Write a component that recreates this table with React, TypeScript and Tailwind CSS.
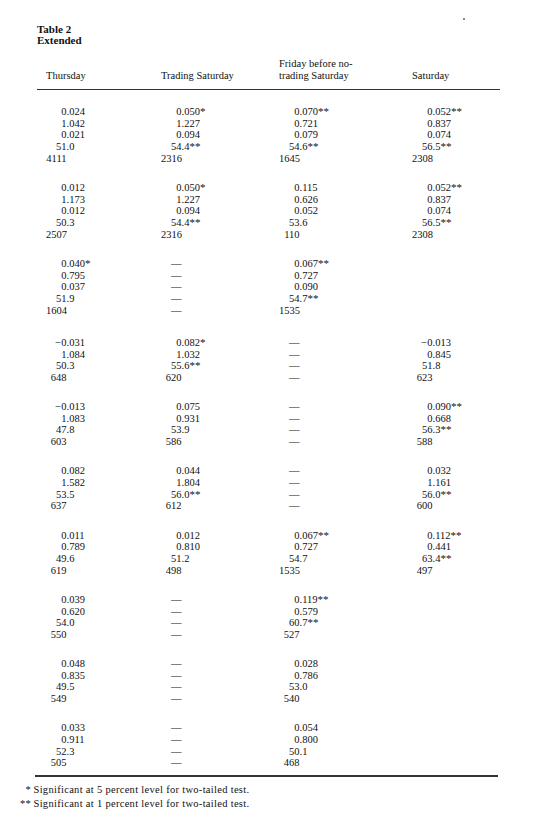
import React from "react";

type Block = string[][];

const DASH4 = ["—", "—", "—", "—"];
const DASH5 = ["—", "—", "—", "—", "—"];

const BLOCKS: Block[] = [
  [
    ["0.024", "1.042", "0.021", "51.0", "4111"],
    ["0.050*", "1.227", "0.094", "54.4**", "2316"],
    ["0.070**", "0.721", "0.079", "54.6**", "1645"],
    ["0.052**", "0.837", "0.074", "56.5**", "2308"],
  ],
  [
    ["0.012", "1.173", "0.012", "50.3", "2507"],
    ["0.050*", "1.227", "0.094", "54.4**", "2316"],
    ["0.115", "0.626", "0.052", "53.6", "110"],
    ["0.052**", "0.837", "0.074", "56.5**", "2308"],
  ],
  [
    ["0.040*", "0.795", "0.037", "51.9", "1604"],
    DASH5,
    ["0.067**", "0.727", "0.090", "54.7**", "1535"],
    [],
  ],
  [
    ["−0.031", "1.084", "50.3", "648"],
    ["0.082*", "1.032", "55.6**", "620"],
    DASH4,
    ["−0.013", "0.845", "51.8", "623"],
  ],
  [
    ["−0.013", "1.083", "47.8", "603"],
    ["0.075", "0.931", "53.9", "586"],
    DASH4,
    ["0.090**", "0.668", "56.3**", "588"],
  ],
  [
    ["0.082", "1.582", "53.5", "637"],
    ["0.044", "1.804", "56.0**", "612"],
    DASH4,
    ["0.032", "1.161", "56.0**", "600"],
  ],
  [
    ["0.011", "0.789", "49.6", "619"],
    ["0.012", "0.810", "51.2", "498"],
    ["0.067**", "0.727", "54.7", "1535"],
    ["0.112**", "0.441", "63.4**", "497"],
  ],
  [
    ["0.039", "0.620", "54.0", "550"],
    DASH4,
    ["0.119**", "0.579", "60.7**", "527"],
    [],
  ],
  [
    ["0.048", "0.835", "49.5", "549"],
    DASH4,
    ["0.028", "0.786", "53.0", "540"],
    [],
  ],
  [
    ["0.033", "0.911", "52.3", "505"],
    DASH4,
    ["0.054", "0.800", "50.1", "468"],
    [],
  ],
];

// splits a value so the decimal point lines up down the column
function Value({ v }: { v: string }) {
  const m = v.match(/^(−?\d+|—)(\.\d+)?(\**)$/);
  const whole = m ? m[1] : v;
  const frac = m ? (m[2] ?? "") : "";
  const stars = m ? m[3] : "";
  return (
    <div className="flex h-[11.7px] items-center leading-[11.7px]">
      <span className="inline-block w-[20.5px] text-right whitespace-nowrap">{whole}</span>
      <span className="whitespace-nowrap">
        {frac}
        {stars && <span className="text-[11px]">{stars}</span>}
      </span>
    </div>
  );
}

export default function App() {
  return (
    <div
      className="relative min-h-[826px] w-[558px] bg-white text-[#111]"
      style={{ fontFamily: '"Liberation Serif", "Times New Roman", serif' }}
    >
      <span aria-hidden className="absolute left-[463px] top-[18px] h-[1.5px] w-[1.5px] bg-[#888]" />

      <div className="pl-[37px] pt-[24px] text-[11px] font-bold leading-[11px]">
        <div>Table 2</div>
        <div>Extended</div>
      </div>

      <div className="mt-[12px] ml-[46px] grid grid-cols-[115px_118px_133px_1fr] items-end text-[10.5px] leading-[11.5px]">
        <div>Thursday</div>
        <div>Trading Saturday</div>
        <div>
          Friday before no-
          <br />
          trading Saturday
        </div>
        <div>Saturday</div>
      </div>

      <div className="ml-[37px] mt-[7.5px] h-[1.5px] w-[463px] bg-[#333]" />

      <div className="ml-[46px] pt-[16px] text-[10.5px]">
        {BLOCKS.map((block, i) => (
          <div
            key={i}
            className={
              "grid grid-cols-[115px_118px_133px_1fr] " +
              (i === 3 ? "mt-[20.5px]" : i > 0 ? "mt-[17.5px]" : "")
            }
          >
            {block.map((col, j) => (
              <div key={j}>
                {col.map((v, k) => (
                  <Value key={k} v={v} />
                ))}
              </div>
            ))}
          </div>
        ))}
      </div>

      <div className="ml-[35px] mt-[6px] h-[1.5px] w-[463px] bg-[#333]" />

      <div className="mt-[6px] text-[10.5px] leading-[14px] tracking-[0.3px]">
        <div className="flex">
          <span className="ml-[20px] inline-block w-[11px] text-right">*</span>
          <span className="ml-[2.5px]">Significant at 5 percent level for two-tailed test.</span>
        </div>
        <div className="flex">
          <span className="ml-[20px] inline-block w-[11px] text-right">**</span>
          <span className="ml-[2.5px]">Significant at 1 percent level for two-tailed test.</span>
        </div>
      </div>
    </div>
  );
}
